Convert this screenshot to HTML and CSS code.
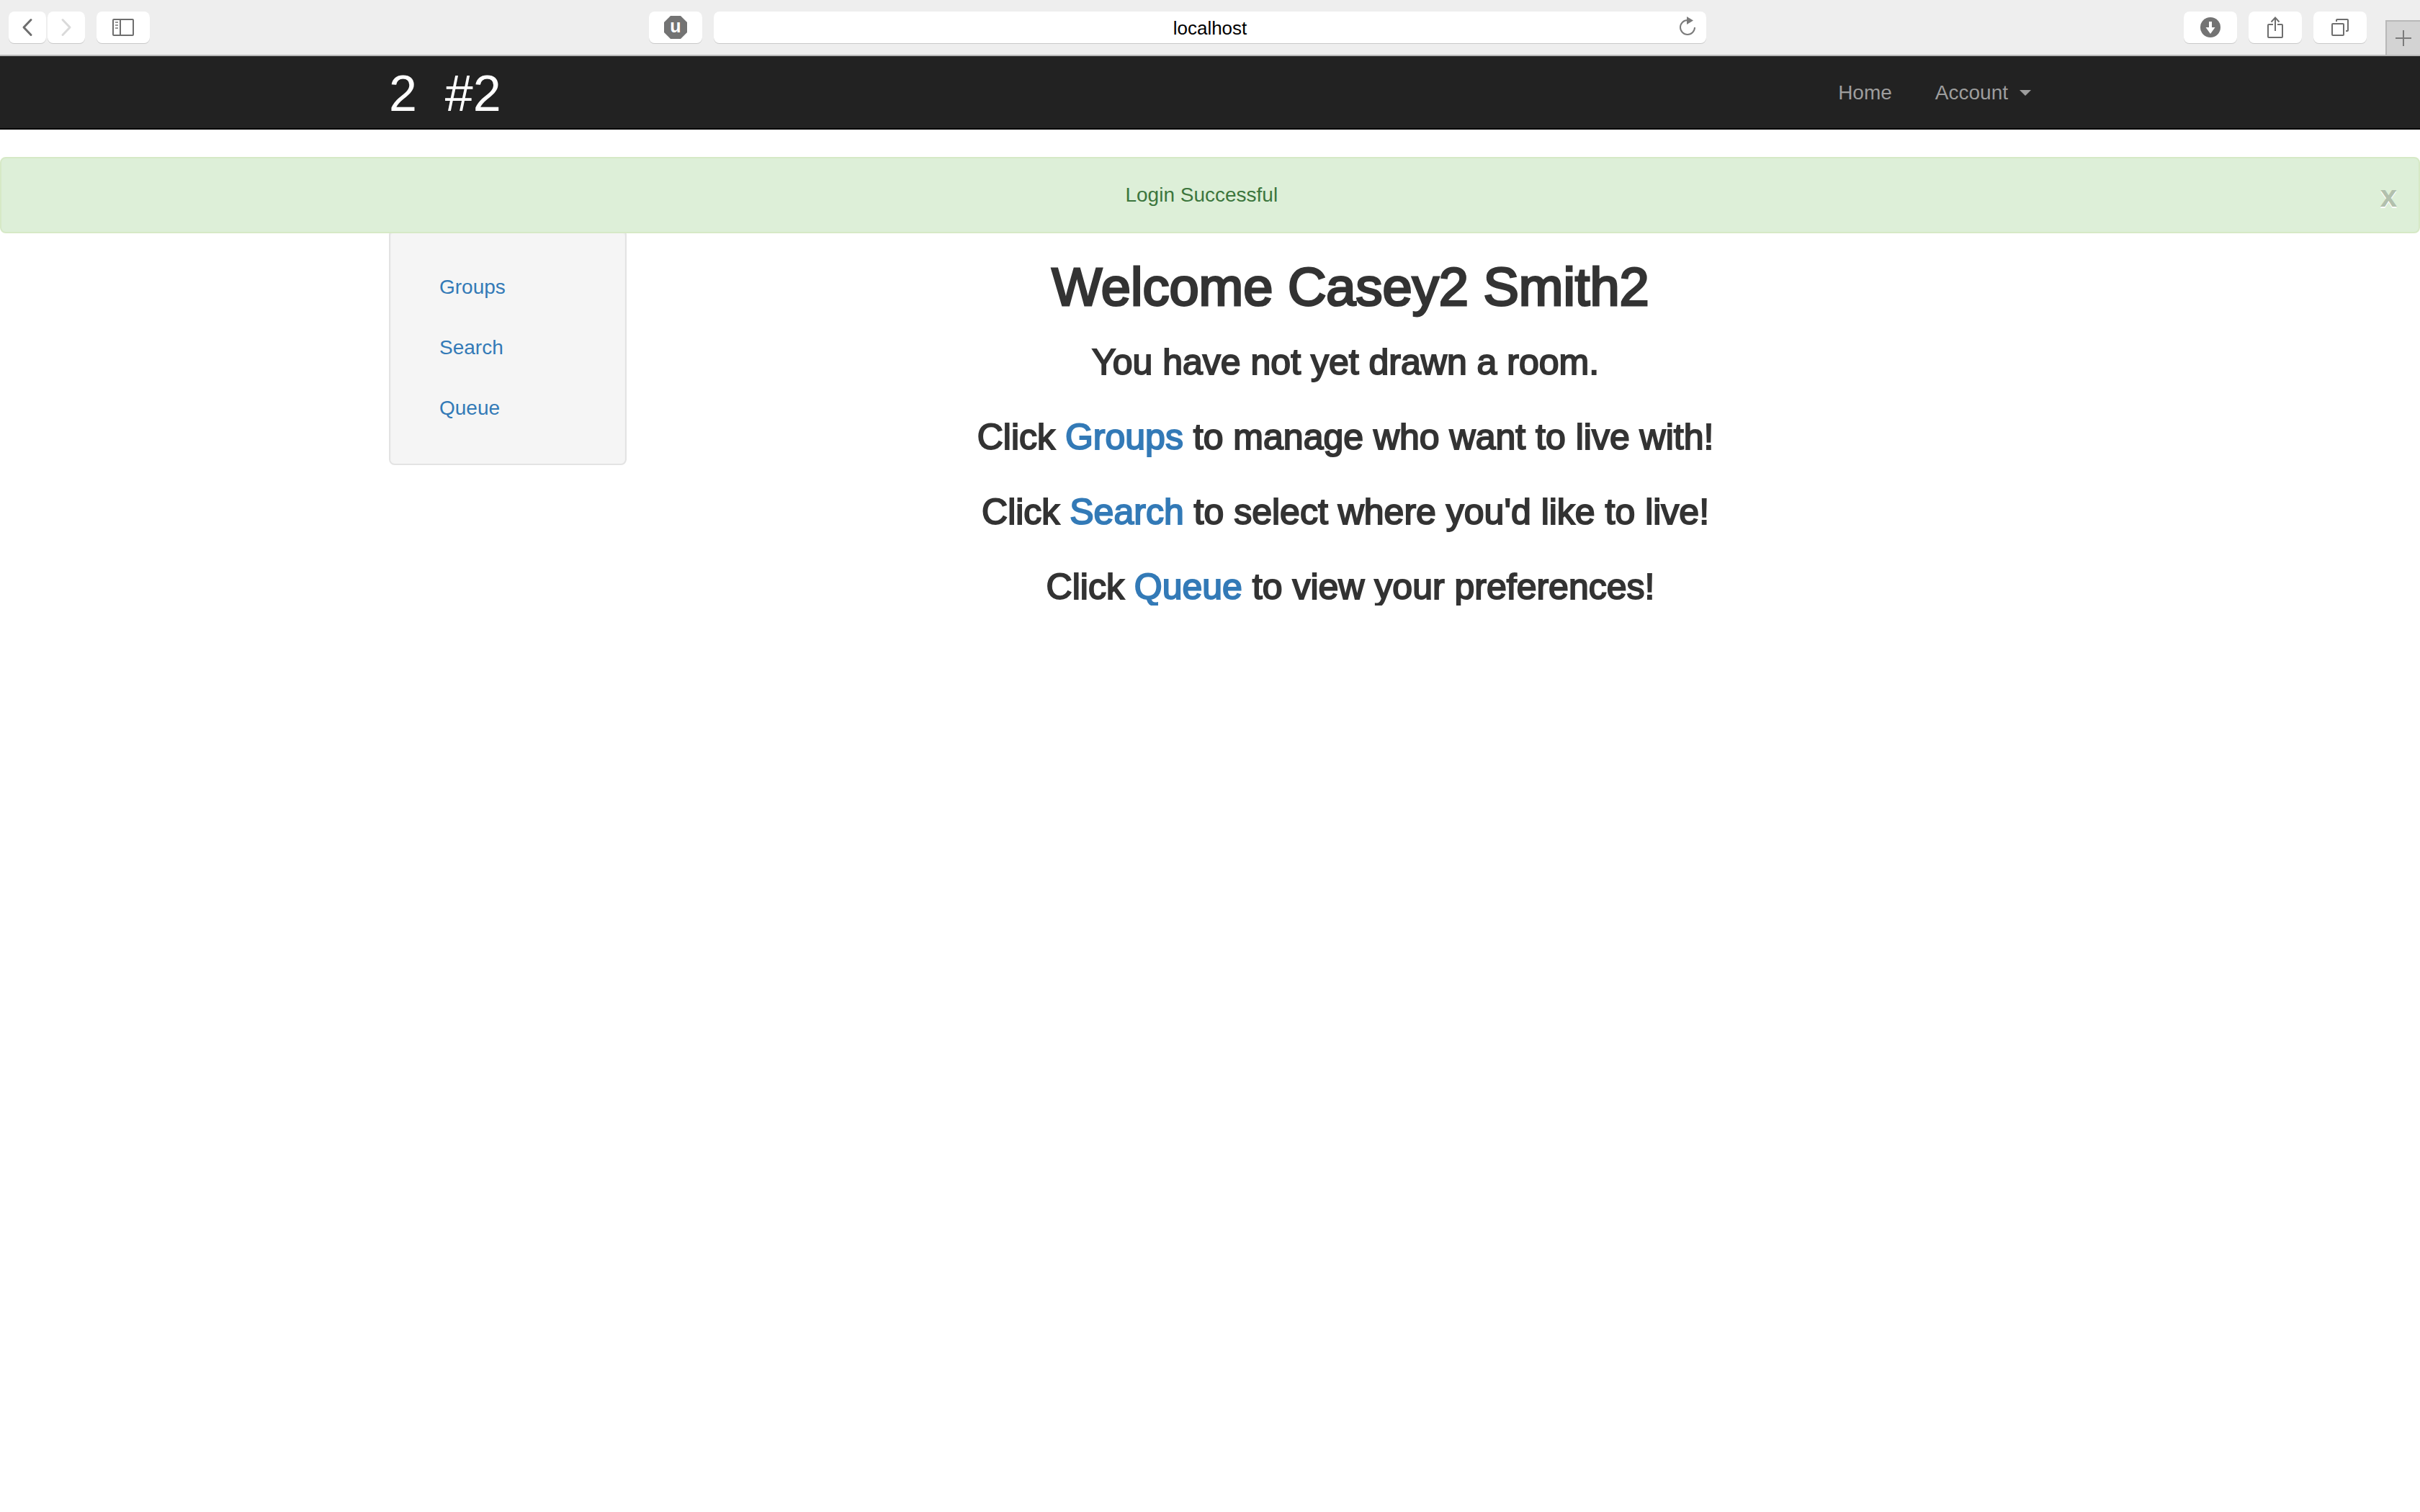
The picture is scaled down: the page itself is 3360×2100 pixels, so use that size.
FILE: index.html
```html
<!DOCTYPE html>
<html lang="en">
<head>
<meta charset="utf-8">
<title>localhost</title>
<link rel="stylesheet" href="styles.css">
</head>
<body>
<header class="toolbar">
  <div class="tools tools-left">
    <div class="history">
      <button class="tool tool-narrow" type="button" aria-label="Back"><svg width="16" height="26" viewBox="0 0 16 26"><path d="M13 2.500 3 13l10 10.500" fill="none" stroke="#6e6e6e" stroke-width="3" stroke-linecap="round" stroke-linejoin="round"/></svg></button>
      <button class="tool tool-narrow" type="button" aria-label="Forward"><svg width="16" height="26" viewBox="0 0 16 26"><path d="M3 2.500 13 13 3 23.500" fill="none" stroke="#dadada" stroke-width="3" stroke-linecap="round" stroke-linejoin="round"/></svg></button>
    </div>
    <button class="tool" type="button" aria-label="Show sidebar"><svg width="30" height="24" viewBox="0 0 30 24" fill="none" stroke="#6e6e6e" stroke-width="2"><rect x="1" y="1" width="28" height="22" rx="1"/><path d="M11 1v22"/><path d="M4 5h4M4 9h4M4 13h4" stroke="#999"/></svg></button>
    <button class="tool tool-extension" type="button" aria-label="Content blocker"><svg width="32" height="32" viewBox="0 0 32 32"><path d="M9 0h14l9 9v14l-9 9H9l-9-9V9z" fill="#737373"/><text class="blocker-letter" x="16" y="23" text-anchor="middle">u</text></svg></button>
  </div>
  <form class="address">
    <input class="address-input" type="text" value="localhost" aria-label="Address">
    <button class="reload" type="button" aria-label="Reload"><svg width="24" height="28" viewBox="0 0 24 28"><path d="M12 6a10 10 0 1 0 10 10" fill="none" stroke="#7b7b7b" stroke-width="2"/><path d="M11 1l9 5.500-9 5.500z" fill="#7b7b7b"/></svg></button>
  </form>
  <div class="tools tools-right">
    <button class="tool" type="button" aria-label="Downloads"><svg width="28" height="28" viewBox="0 0 28 28"><circle cx="14" cy="14" r="14" fill="#737373"/><path d="M12 6h4v8h4.500L14 23 7.500 14H12z" fill="#fff"/></svg></button>
    <button class="tool" type="button" aria-label="Share"><svg width="22" height="32" viewBox="0 0 22 32" fill="none" stroke="#6e6e6e" stroke-width="2"><path d="M8 12H2q-1 0-1 1v16q0 1 1 1h18q1 0 1-1V13q0-1-1-1h-6"/><path d="M11 21V3M5.500 8.500 11 2.500l5.500 6"/></svg></button>
    <button class="tool" type="button" aria-label="Show all tabs"><svg width="24" height="24" viewBox="0 0 24 24" fill="none" stroke="#6e6e6e" stroke-width="2"><rect x="1" y="7" width="16" height="16" rx="1"/><path d="M7 4V2q0-1 1-1h14q1 0 1 1v14q0 1-1 1h-2"/></svg></button>
    <button class="new-tab" type="button" aria-label="New tab"><svg width="22" height="22" viewBox="0 0 22 22"><path d="M11 0v22M0 11h22" stroke="#7b7b7b" stroke-width="2"/></svg></button>
  </div>
</header>

<nav class="navbar">
  <div class="container navbar-inner">
    <a class="brand" href="#">2&nbsp; #2</a>
    <ul class="nav-links">
      <li><a href="#">Home</a></li>
      <li><a href="#">Account <span class="caret"></span></a></li>
    </ul>
  </div>
</nav>

<div class="alert" role="alert">
  <span class="alert-text">Login Successful</span>
  <button class="close" type="button" aria-label="Close">x</button>
</div>

<div class="container row">
  <aside class="well">
    <ul class="side-links">
      <li><a href="#">Groups</a></li>
      <li><a href="#">Search</a></li>
      <li><a href="#">Queue</a></li>
    </ul>
  </aside>
  <main class="content">
    <h1>Welcome Casey2 Smith2</h1>
    <h3>You have not yet drawn a room.&nbsp;</h3>
    <h3>Click <a href="#">Groups</a> to manage who want to live with!&nbsp;</h3>
    <h3>Click <a href="#">Search</a> to select where you'd like to live!&nbsp;</h3>
    <h3>Click <a href="#">Queue</a> to view your preferences!</h3>
  </main>
</div>
</body>
</html>
```
FILE: styles.css
```css
* {
  box-sizing: border-box;
}

body {
  margin: 0;
  background: #fff;
  color: #333;
  font: 28px/40px "Liberation Sans", Arial, sans-serif;
}

a {
  color: #337ab7;
  text-decoration: none;
}

ul {
  margin: 0;
  padding: 0;
  list-style: none;
}

button,
input {
  border: 0;
  padding: 0;
  font: inherit;
}

svg {
  display: block;
}

/* Browser toolbar */
.toolbar {
  display: grid;
  grid-template-columns: 1fr 41% 1fr;
  column-gap: 16px;
  align-items: start;
  height: 78px;
  border-bottom: 2px solid #b8b8b8;
  background: #eee;
}

.tools {
  display: flex;
  gap: 16px;
  padding-top: 16px;
}

.tools-left {
  padding-left: 12px;
}

.tools-right {
  justify-content: flex-end;
}

.history {
  display: flex;
  gap: 2px;
}

.tool {
  display: flex;
  align-items: center;
  justify-content: center;
  width: 74px;
  height: 44px;
  border-radius: 8px;
  background: #fff;
  box-shadow: 0 1px 0 #c8c8c8;
}

.tool-narrow {
  width: 52px;
}

.tool-extension {
  margin-left: auto;
}

.blocker-letter {
  fill: #fff;
  font: bold 25px "Liberation Sans", Arial, sans-serif;
}

.address {
  display: flex;
  height: 44px;
  margin: 16px 0 0;
  padding-left: 52px;
  border-radius: 8px;
  background: #fff;
  box-shadow: 0 1px 0 #c8c8c8;
}

.address-input {
  flex: 1;
  min-width: 0;
  padding-top: 2px;
  background: none;
  color: #000;
  font-size: 26px;
  text-align: center;
}

.reload {
  display: flex;
  justify-content: center;
  width: 52px;
  padding-top: 6px;
  background: none;
}

.new-tab {
  display: flex;
  align-items: center;
  justify-content: center;
  width: 48px;
  height: 48px;
  margin: 12px 0 0 10px;
  border: solid #b8b8b8;
  border-width: 2px 0 0 2px;
  background: #d3d3d3;
}

/* Site navigation */
.container {
  width: 100%;
  max-width: 2340px;
  margin: 0 auto;
  padding: 0 30px;
}

.navbar {
  border-bottom: 2px solid #080808;
  background: #222;
}

.navbar-inner {
  display: flex;
  align-items: center;
  justify-content: space-between;
  height: 100px;
  padding-top: 4px;
  padding-right: 0;
}

.brand {
  color: #fff;
  font-size: 70px;
  line-height: 96px;
}

.nav-links {
  display: flex;
}

.nav-links a {
  display: flex;
  align-items: center;
  gap: 16px;
  padding: 26px 30px 28px;
  color: #9d9d9d;
}

.caret {
  border: solid transparent;
  border-width: 8px 8px 0;
  border-top-color: #9d9d9d;
}

/* Flash message */
.alert {
  position: relative;
  z-index: 1;
  display: flex;
  align-items: center;
  height: 106px;
  margin-top: 38px;
  padding: 0 30px;
  border: 2px solid #d6e9c6;
  border-radius: 8px;
  background: #ddefd8;
  color: #3c763d;
}

.alert-text {
  flex: 1;
  text-align: center;
}

.close {
  padding-top: 4px;
  background: none;
  color: #b2c0ad;
  font-size: 42px;
  font-weight: bold;
  line-height: 42px;
  text-shadow: 0 2px 0 #fff;
}

/* Page body */
.row {
  display: grid;
  grid-template-columns: 330px 1fr;
  column-gap: 60px;
  align-items: start;
  margin-top: -6px;
  padding-right: 0;
}

.well {
  padding: 38px;
  border: 2px solid #e3e3e3;
  border-radius: 8px;
  background: #f5f5f5;
  box-shadow: inset 0 2px 2px rgba(0, 0, 0, 0.05);
}

.side-links {
  display: grid;
  gap: 4px;
}

.side-links a {
  display: block;
  padding: 21px 30px 19px;
}

.content {
  padding: 41px 30px 0 0;
  text-align: center;
}

h1,
h3 {
  margin: 0;
  font-weight: normal;
}

h1 {
  font-size: 74px;
  line-height: 80px;
  -webkit-text-stroke: 3px;
}

h3 {
  margin-top: 52px;
  font-size: 50px;
  line-height: 52px;
  -webkit-text-stroke: 2px;
}

h1 + h3 {
  margin-top: 38px;
}
```
